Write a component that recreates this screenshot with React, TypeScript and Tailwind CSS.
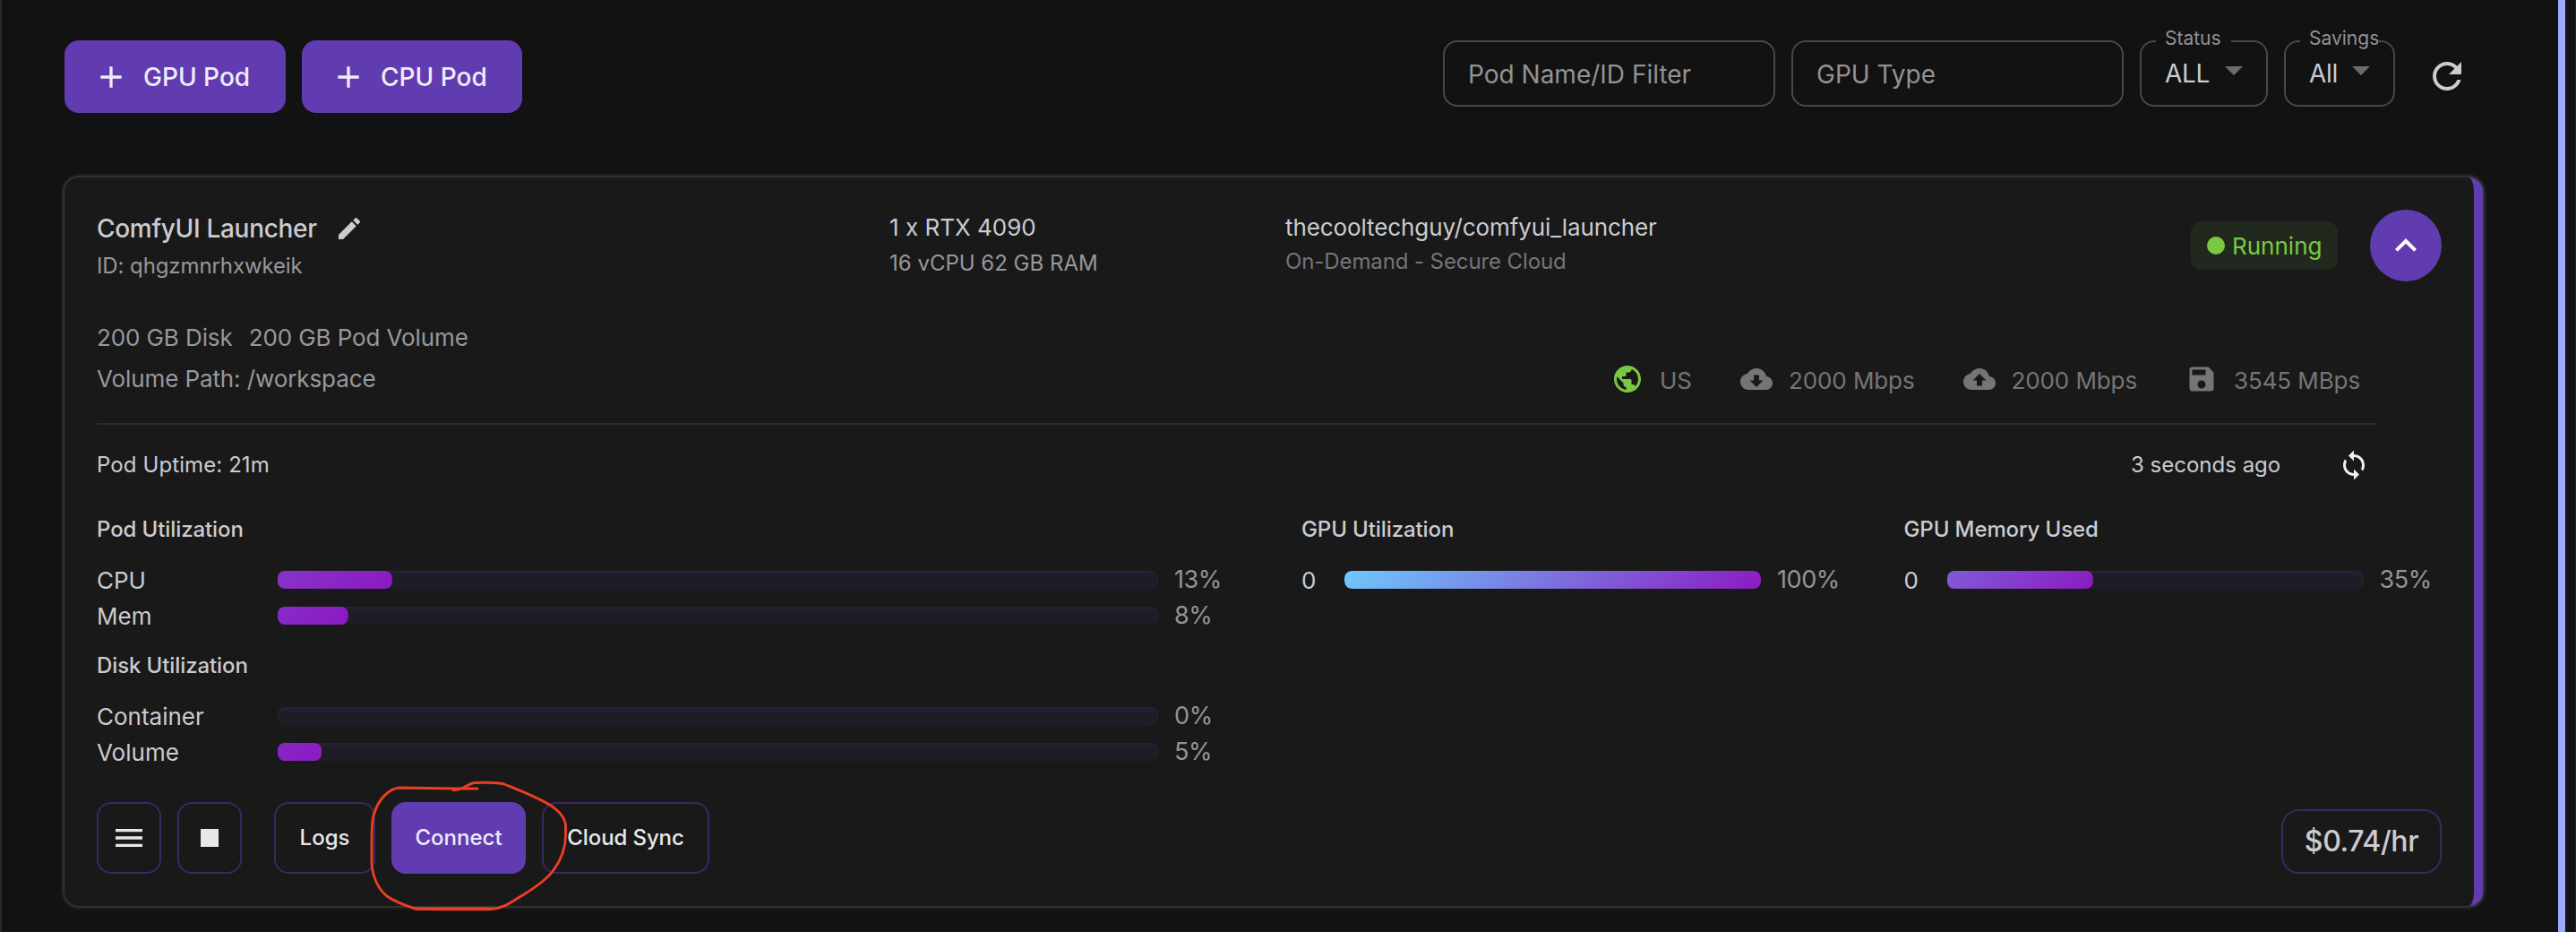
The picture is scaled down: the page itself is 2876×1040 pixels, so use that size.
import React from 'react';

const ICONS = {
  add: 'M19 13h-6v6h-2v-6H5v-2h6V5h2v6h6z',
  edit: 'M3 17.25V21h3.75L17.81 9.94l-3.75-3.75zM20.71 7.04c.39-.39.39-1.02 0-1.41l-2.34-2.34c-.39-.39-1.02-.39-1.41 0l-1.83 1.83 3.75 3.75z',
  dropDown: 'm7 10 5 5 5-5z',
  refresh:
    'M17.65 6.35C16.2 4.9 14.21 4 12 4c-4.42 0-7.99 3.58-7.99 8s3.57 8 7.99 8c3.73 0 6.84-2.55 7.73-6h-2.08c-.82 2.33-3.04 4-5.65 4-3.31 0-6-2.69-6-6s2.69-6 6-6c1.66 0 3.14.69 4.22 1.78L13 11h7V4z',
  expandLess: 'm12 8-6 6 1.41 1.41L12 10.83l4.59 4.58L18 14z',
  globe:
    'M12 2C6.48 2 2 6.48 2 12s4.48 10 10 10 10-4.48 10-10S17.52 2 12 2m-1 17.93c-3.95-.49-7-3.85-7-7.93 0-.62.08-1.21.21-1.79L9 15v1c0 1.1.9 2 2 2zm6.9-2.54c-.26-.81-1-1.39-1.9-1.39h-1v-3c0-.55-.45-1-1-1H8v-2h2c.55 0 1-.45 1-1V7h2c1.1 0 2-.9 2-2v-.41c2.93 1.19 5 4.06 5 7.41 0 2.08-.8 3.97-2.1 5.39',
  cloudDown:
    'M19.35 10.04C18.67 6.59 15.64 4 12 4 9.11 4 6.6 5.64 5.35 8.04 2.34 8.36 0 10.91 0 14c0 3.31 2.69 6 6 6h13c2.76 0 5-2.24 5-5 0-2.64-2.05-4.78-4.65-4.96M17 13l-5 5-5-5h3V9h4v4z',
  cloudUp:
    'M19.35 10.04C18.67 6.59 15.64 4 12 4 9.11 4 6.6 5.64 5.35 8.04 2.34 8.36 0 10.91 0 14c0 3.31 2.69 6 6 6h13c2.76 0 5-2.24 5-5 0-2.64-2.05-4.78-4.65-4.96M14 13v4h-4v-4H7l5-5 5 5z',
  save: 'M17 3H5c-1.11 0-2 .9-2 2v14c0 1.1.89 2 2 2h14c1.1 0 2-.9 2-2V7zm-5 16c-1.66 0-3-1.34-3-3s1.34-3 3-3 3 1.34 3 3-1.34 3-3 3m3-10H5V5h10z',
  sync: 'M12 4V1L8 5l4 4V6c3.31 0 6 2.69 6 6 0 1.01-.25 1.97-.7 2.8l1.46 1.46C19.54 15.03 20 13.57 20 12c0-4.42-3.58-8-8-8m0 14c-3.31 0-6-2.69-6-6 0-1.01.25-1.97.7-2.8L5.24 7.74C4.46 8.97 4 10.43 4 12c0 4.42 3.58 8 8 8v3l4-4-4-4z',
  menu: 'M3 18h18v-2H3zm0-5h18v-2H3zm0-7v2h18V6z',
  stop: 'M6 6h12v12H6z',
};

function Icon({ name, className }: { name: keyof typeof ICONS; className: string }) {
  return (
    <svg viewBox="0 0 24 24" fill="currentColor" className={`shrink-0 ${className}`}>
      <path d={ICONS[name]} />
    </svg>
  );
}

function CreateButton({ label, className }: { label: string; className: string }) {
  return (
    <button className={`flex h-[81px] items-center gap-4 rounded-2xl bg-[#613bb0] pl-8 text-[28px] font-medium text-[#efebf7] ${className}`}>
      <Icon name="add" className="size-10" />
      {label}
    </button>
  );
}

function FilterInput({ label }: { label: string }) {
  return (
    <div className="flex h-[74px] w-[371px] items-center rounded-2xl border-2 border-[#484848] pt-[2px] pl-[26px] text-[28px] text-[#929296]">
      {label}
    </div>
  );
}

function FilterSelect({ label, value, box, notch, valueBox }: { label: string; value: string; box: string; notch: string; valueBox: string }) {
  return (
    <div className={`relative flex h-[74px] items-center rounded-2xl border-2 border-[#484848] pl-[26px] text-[28px] text-[#cbcbd0] ${box}`}>
      <span className={`absolute -top-[17px] left-4 h-[26px] bg-[#121212] pl-[10px] text-[21px] leading-[26px] text-[#929296] ${notch}`}>{label}</span>
      <span className={`tracking-[-0.3px] ${valueBox}`}>{value}</span>
      <Icon name="dropDown" className="mb-2 size-12 text-[#6c6c6e]" />
    </div>
  );
}

function Bar({ value, className }: { value: number; className: string }) {
  return (
    <div className={`h-5 shrink-0 overflow-hidden rounded-lg bg-[#201c27] shadow-[inset_0_2px_4px_#2a2340] ${className}`}>
      <div
        className="h-full rounded-lg bg-[linear-gradient(135deg,#6dcafc,#8b1ac1)]"
        style={{ transform: `translateX(${value - 100}%)` }}
      />
    </div>
  );
}

function Meter({ label, value, labelBox, bar }: { label: string; value: number; labelBox: string; bar: string }) {
  return (
    <div className="flex h-10 items-center text-[26px] text-[#cbcbd0]">
      <span className={`shrink-0 ${labelBox}`}>{label}</span>
      <Bar value={value} className={bar} />
      <span className="ml-[18px] text-[27px] tracking-[-0.4px] text-[#949496]">{value}%</span>
    </div>
  );
}

function Heading({ children }: { children: string }) {
  return <h3 className="mb-[9px] text-[24px] leading-[54px] font-medium tracking-[-0.1px] text-[#cbcbd0]">{children}</h3>;
}

function Stat({ icon, tone, label, className }: { icon: keyof typeof ICONS; tone: string; label: string; className: string }) {
  return (
    <div className={`flex h-[46px] items-center gap-[18px] ${className}`}>
      <Icon name={icon} className={`size-9 ${tone}`} />
      <span className="pt-[3px]">{label}</span>
    </div>
  );
}

const OUTLINED = 'flex h-20 items-center justify-center rounded-2xl border-2 border-[#3b2763] text-[#e8e8e8]';

export default function App() {
  return (
    <div className="relative flex h-[1040px] w-[2876px] overflow-hidden border-r border-l-2 border-r-[#262626] border-l-[#292929] bg-[#121212] font-['Inter',sans-serif] whitespace-nowrap">
      <main className="w-[2770px] shrink-0 pt-[45px] pl-[70px]">
        <header className="flex h-[153px] items-start">
          <CreateButton label="GPU Pod" className="w-[247px]" />
          <CreateButton label="CPU Pod" className="ml-[18px] w-[246px]" />
          <div className="ml-auto flex gap-[18px]">
            <FilterInput label="Pod Name/ID Filter" />
            <FilterInput label="GPU Type" />
            <FilterSelect label="Status" value="ALL" box="w-[143px]" notch="w-[84px]" valueBox="w-[53px]" />
            <FilterSelect label="Savings" value="All" box="w-[124px]" notch="w-[88px]" valueBox="w-[34px]" />
          </div>
          <button className="mt-4 mr-4 ml-[34px] text-[#cbcbd0]">
            <Icon name="refresh" className="size-12" />
          </button>
        </header>

        <section className="h-[813px] rounded-2xl border-r-[10px] border-[#613bb0] bg-[#191919] px-9 pt-9 shadow-[0_0_4px_1px_rgba(255,255,255,0.26)]">
          <div className="flex h-20 items-start text-[26px] text-[#cbcbd0]">
            <div className="w-[885px]">
              <div className="flex h-[42px] items-center text-[28px] font-medium tracking-[-0.3px]">
                <span className="w-[266px]">ComfyUI Launcher</span>
                <Icon name="edit" className="size-8" />
              </div>
              <div className="text-[24px] leading-[42px] tracking-[-0.1px] text-[#98989b]">ID: qhgzmnrhxwkeik</div>
            </div>
            <div className="w-[442px]">
              <div className="leading-[39px]">1 x RTX 4090</div>
              <div className="text-[24px] leading-[41px] text-[#98989b]">16 vCPU 62 GB RAM</div>
            </div>
            <div>
              <div className="leading-[39px] tracking-[-0.1px]">thecooltechguy/comfyui_launcher</div>
              <div className="text-[24px] leading-[37px] tracking-[-0.1px] text-[#757577]">On-Demand - Secure Cloud</div>
            </div>
            <div className="ml-auto flex items-center gap-9">
              <div className="flex h-[54px] w-[164px] items-center gap-2 rounded-xl bg-[#21291e] pl-[18px] text-[#7ac943]">
                <span className="size-5 rounded-full bg-[#7ac943]" />
                Running
              </div>
              <button className="flex size-20 items-center justify-center rounded-full bg-[#613bb0] text-white">
                <Icon name="expandLess" className="size-12" />
              </button>
            </div>
          </div>

          <div className="mt-10 flex w-[2528px] items-end justify-between text-[26px] leading-[46px] text-[#98989b]">
            <div className="tracking-[-0.1px]">
              <div className="flex gap-[18px]">
                <span>200 GB Disk</span>
                <span>200 GB Pod Volume</span>
              </div>
              <div>Volume Path: /workspace</div>
            </div>
            <div className="flex w-[837px] tracking-[-0.1px] text-[#757578]">
              <Stat icon="globe" tone="text-[#7ac943]" label="US" className="w-36" />
              <Stat icon="cloudDown" tone="" label="2000 Mbps" className="w-[248.5px]" />
              <Stat icon="cloudUp" tone="" label="2000 Mbps" className="w-[248.5px]" />
              <Stat icon="save" tone="" label="3545 MBps" className="" />
            </div>
          </div>

          <hr className="mt-[26px] w-[2546px] border-t-2 border-[#2c2c2c]" />

          <div className="flex h-[90px] items-center text-[24px] text-[#cbcbd0]">
            <span className="w-[2271px] tracking-[0.1px]">Pod Uptime: 21m</span>
            <span className="w-[231px]">3 seconds ago</span>
            <Icon name="sync" className="size-9 text-[#f0f0f0]" />
          </div>

          <div className="flex h-[295px]">
            <div className="w-[1345px]">
              <Heading>Pod Utilization</Heading>
              <Meter label="CPU" value={13} labelBox="w-[202px]" bar="w-[983px]" />
              <Meter label="Mem" value={8} labelBox="w-[202px]" bar="w-[983px]" />
              <div className="h-[9px]" />
              <Heading>Disk Utilization</Heading>
              <Meter label="Container" value={0} labelBox="w-[202px]" bar="w-[983px]" />
              <Meter label="Volume" value={5} labelBox="w-[202px]" bar="w-[983px]" />
            </div>
            <div className="w-[672.5px]">
              <Heading>GPU Utilization</Heading>
              <Meter label="0" value={100} labelBox="w-12" bar="w-[465px]" />
            </div>
            <div>
              <Heading>GPU Memory Used</Heading>
              <Meter label="0" value={35} labelBox="w-12" bar="w-[465px]" />
            </div>
          </div>

          <div className="mt-9 flex items-end text-[24px] font-medium">
            <button className={`w-[72px] ${OUTLINED}`}>
              <Icon name="menu" className="size-10" />
            </button>
            <button className={`ml-[18px] w-[72px] ${OUTLINED}`}>
              <Icon name="stop" className="size-10" />
            </button>
            <button className={`ml-9 w-[113px] ${OUTLINED}`}>Logs</button>
            <button className="ml-[18px] h-20 w-[150px] rounded-2xl bg-[#613bb0] text-[#efebf7]">Connect</button>
            <button className={`ml-[18px] w-[187px] tracking-[-0.1px] ${OUTLINED}`}>Cloud Sync</button>
            <div className="ml-auto flex h-[72px] w-[179px] items-center justify-center rounded-[20px] border-2 border-[#3b2763] text-[32px] tracking-[-0.4px] text-[#cbcbd0]">
              $0.74/hr
            </div>
          </div>
        </section>
      </main>

      <div className="ml-[84px] w-2 shrink-0 bg-[#9caafa]" />

      {/* Hand-drawn highlight around the Connect button */}
      <svg viewBox="0 0 240 160" className="absolute top-[860px] left-[398px] h-[160px] w-[240px]" fill="none" stroke="#ea3f22" strokeWidth="2.9" strokeLinecap="round" strokeLinejoin="round">
        <path d="M133 20H112L46 19C34 20 22 32 17 50C15 58 15 68 15 80V104C16 118 22 132 32 140C42 147 52 150 62 153.500C70 155 130 155 148 154.500C164 153 170 147 185 138C198 130 210 122 218 111C226 100 231.500 88 231.500 72V60C230 51 222 43 212 37C196 28 180 22 163 15C152 12 140 13.500 130 13.500C122 14 118 22 106 21.500" />
        <path d="M64 154H148" strokeWidth="3.6" />
      </svg>
    </div>
  );
}
